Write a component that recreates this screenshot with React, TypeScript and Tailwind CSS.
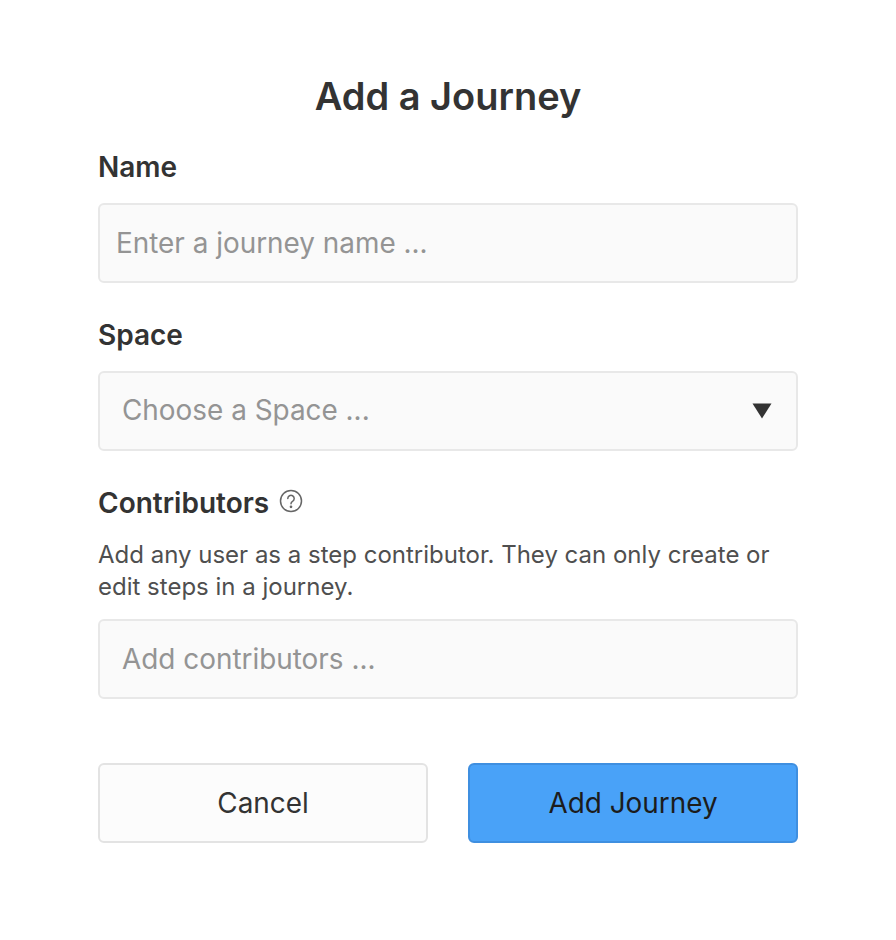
const inputBox = "h-[80px] w-full rounded-[6px] border-2 border-[#e8e8e8] bg-[#fafafa] flex items-center text-[27.9px] text-[#949494]"

export default function App() {
  return (
    <div className="min-h-[940px] bg-white font-['Inter',sans-serif] text-[#333333]">
      <div className="mx-auto w-[700px] pt-[70px]">
        <h1 className="text-center text-[38px] leading-[52px] font-semibold">Add a Journey</h1>

        <div className="mt-[27px] text-[28px] leading-[36px] font-semibold">Name</div>
        <div className={`mt-[18px] px-[16px] pt-[1px] ${inputBox}`}>Enter a journey name ...</div>

        <div className="mt-[34px] text-[28px] leading-[36px] font-semibold">Space</div>
        <div className={`mt-[18px] pl-[22px] pr-[24px] justify-between ${inputBox}`}>
          <span>Choose a Space ...</span>
          <svg width="20" height="16" viewBox="0 0 20 16" className="text-[#333333]">
            <path d="M0.5 0.5H19.5L10 15.5Z" fill="currentColor" />
          </svg>
        </div>

        <div className="mt-[34px] flex items-center gap-[10px]">
          <span className="text-[28px] leading-[36px] font-semibold">Contributors</span>
          <svg width="24" height="24" viewBox="0 0 24 24" fill="none" stroke="#666" strokeWidth="1.5" className="mb-[4px]">
            <circle cx="12" cy="12" r="10.5" />
            <path d="M8.8 9.5a3.2 3.2 0 1 1 4.8 2.8c-1 .6-1.6 1.2-1.6 2.4" strokeLinecap="round" />
            <circle cx="12" cy="17.8" r="0.6" fill="#666" />
          </svg>
        </div>
        <p className="mt-[18px] text-[24px] leading-[32px] text-[#4f4f4f]">
          Add any user as a step contributor. They can only create or edit steps in a journey.
        </p>
        <div className={`mt-[16px] px-[22px] pt-[1px] ${inputBox}`}>Add contributors ...</div>

        <div className="mt-[64px] grid grid-cols-2 gap-[40px]">
          <button className="h-[80px] rounded-[6px] border-2 border-[#e3e3e3] bg-[#fcfcfc] pt-[1px] text-[27.9px]">Cancel</button>
          <button className="h-[80px] rounded-[6px] border-2 border-[#3f8fe0] bg-[#49a2f8] pt-[1px] text-[27.9px] text-[#1c1c1c]">Add Journey</button>
        </div>
      </div>
    </div>
  )
}
